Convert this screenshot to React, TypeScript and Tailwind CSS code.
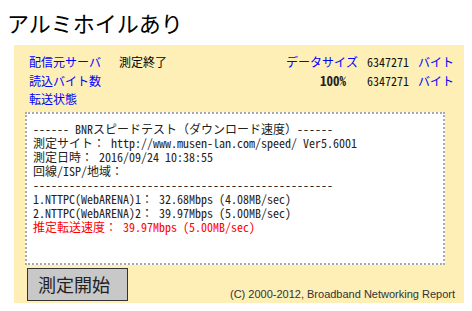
import React from "react";

const mono = { fontFamily: '"Noto Sans Mono CJK JP", "Noto Sans CJK JP", monospace' };

export default function App() {
  const lines: { t: string; red?: boolean }[] = [
    { t: "------ BNRスピードテスト（ダウンロード速度）------" },
    { t: "測定サイト： http://www.musen-lan.com/speed/ Ver5.6001" },
    { t: "測定日時： 2016/09/24 10:38:55" },
    { t: "回線/ISP/地域：" },
    { t: "--------------------------------------------------" },
    { t: "1.NTTPC(WebARENA)1： 32.68Mbps (4.08MB/sec)" },
    { t: "2.NTTPC(WebARENA)2： 39.97Mbps (5.00MB/sec)" },
    { t: "推定転送速度： 39.97Mbps (5.00MB/sec)", red: true },
  ];
  return (
    <div className="w-[472px] h-[311px] bg-white overflow-hidden">
      <div
        className="h-[42px] leading-[44px] pl-[7px] text-[22px] text-black mb-[3px]"
        style={{ fontFamily: '"Noto Sans CJK JP", sans-serif' }}
      >
        アルミホイルあり
      </div>
      <div className="ml-[14px] w-[450px] h-[258px] bg-[#fdefb6] pt-[8px] flex flex-col">
        <div className="flex text-[12px] leading-[18.5px]" style={mono}>
          <div className="pl-[15px] flex flex-col">
            <div className="flex">
              <span className="w-[90px] text-[#0000ff]">配信元サーバ</span>
              <span className="text-black">測定終了</span>
            </div>
            <div className="text-[#0000ff]">読込バイト数</div>
            <div className="text-[#0000ff]">転送状態</div>
          </div>
          <div className="ml-auto mr-[10px] grid grid-cols-[auto_auto_auto] gap-x-[9px] h-fit">
            <span className="text-[#0000ff] text-right">データサイズ</span>
            <span className="text-[#111]">6347271</span>
            <span className="text-[#0000ff]">バイト</span>
            <span className="text-right font-bold text-[13px] text-[#222] pr-[12px]">100%</span>
            <span className="text-[#111]">6347271</span>
            <span className="text-[#0000ff]">バイト</span>
          </div>
        </div>
        <div className="ml-[11px] mt-[3.5px] w-[420px] h-[153px] bg-white border-2 border-dotted border-[#a9a9a9] pt-[8px] pl-[6px]">
          {lines.map((l, i) => (
            <div
              key={i}
              className={`text-[12px] leading-[14px] whitespace-pre ${l.red ? "text-[#ff0000]" : "text-[#222]"}`}
              style={mono}
            >
              {l.t}
            </div>
          ))}
        </div>
        <div className="flex mt-[3px]">
          <button
            className="ml-[13px] w-[101px] h-[33px] bg-[#c8c8c8] border border-[#333] text-left pl-[10px] text-[18px] text-[#222]"
            style={mono}
          >
            測定開始
          </button>
          <div
            className="ml-auto mr-[9px] self-end text-[11px] leading-[14px] text-[#333] mb-[0px]"
            style={{ fontFamily: '"Liberation Sans", Arial, sans-serif' }}
          >
            (C) 2000-2012, Broadband Networking Report
          </div>
        </div>
      </div>
    </div>
  );
}
